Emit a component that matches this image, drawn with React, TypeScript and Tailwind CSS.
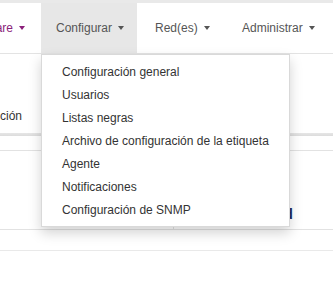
import React from "react";

const MENU = [
  "Configuración general",
  "Usuarios",
  "Listas negras",
  "Archivo de configuración de la etiqueta",
  "Agente",
  "Notificaciones",
  "Configuración de SNMP",
];

function Caret({ color = "border-t-[#555]" }: { color?: string }) {
  return <span className={`ml-[6px] inline-block h-0 w-0 border-x-[3px] border-t-[4px] border-x-transparent ${color}`} />;
}

export default function App() {
  return (
    <div className="relative h-[287px] w-[333px] overflow-hidden bg-white font-['Liberation_Sans',Arial,sans-serif] text-[12px]">
      <div className="h-[3px] bg-[#e9e9e9]" />

      {/* top navbar */}
      <nav className="flex h-[51px] items-stretch border-b border-[#e3e3e3] text-[#555]">
        <div className="flex w-[41px] items-center justify-end overflow-hidden whitespace-nowrap pr-[16px] text-[#8b1f7a]">
          are
          <Caret color="border-t-[#8b1f7a]" />
        </div>
        <div className="flex w-[96px] items-center bg-[#e7e7e7] pl-[15px]">
          Configurar
          <Caret />
        </div>
        <div className="flex w-[105px] items-center pl-[18px]">
          Red(es)
          <Caret />
        </div>
        <div className="flex items-center">
          Administrar
          <Caret />
        </div>
      </nav>

      {/* page content behind the menu */}
      <div className="text-[#333]">
        <div className="flex h-[79px] items-end pb-[8px]">
          <span>ción</span>
        </div>
        <div className="h-[3px] bg-gradient-to-b from-[#e6e6e6] to-[#dcdcdc]" />
        <div className="h-[15px] border-b border-[#e2e2e2]" />
        <div className="flex h-[79px] border-b border-[#e2e2e2]">
          <div className="w-[173px]" />
          <div className="flex flex-1 items-end justify-end border-l border-[#e2e2e2] pb-[4px] pr-[40px]">
            <span className="text-[15px] font-bold text-[#1f2a5c]">Guardad</span>
          </div>
        </div>
        <div className="h-[21px] border-b border-[#e9e9e9]" />
      </div>

      {/* open dropdown */}
      <ul className="absolute left-[41px] top-[54px] w-[249px] border border-black/15 bg-white py-[5px] text-[#333] shadow-[0_6px_12px_rgba(0,0,0,0.175)]">
        {MENU.map((item) => (
          <li key={item} className="flex h-[23px] items-center whitespace-nowrap px-[20px]">
            {item}
          </li>
        ))}
      </ul>
    </div>
  );
}
